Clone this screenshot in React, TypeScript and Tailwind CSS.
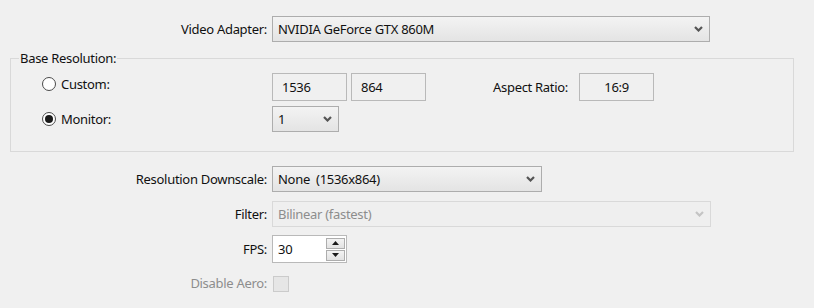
import React from 'react'

const font = { fontFamily: "'Noto Sans', 'Open Sans', sans-serif" }

function Chevron({ disabled }: { disabled?: boolean }) {
    return (
        <svg width="9" height="6" viewBox="0 0 9 6" className="shrink-0">
            <path
                d="M1 1 L4.5 4.5 L8 1"
                fill="none"
                stroke={disabled ? '#c4c4c4' : '#555555'}
                strokeWidth="2.2"
            />
        </svg>
    )
}

function Combo({ text, width, disabled }: { text: string; width: string; disabled?: boolean }) {
    return (
        <div
            className={
                'flex h-[26px] items-center justify-between pl-[5px] pr-[6px] border ' +
                width +
                (disabled
                    ? ' border-[#d9d9d9] bg-[#efefef] text-[#8d8d8d]'
                    : ' border-[#adadad] bg-gradient-to-b from-[#f3f3f3] to-[#e4e4e4] text-[#111111]')
            }
        >
            <span className="whitespace-pre">{text}</span>
            <Chevron disabled={disabled} />
        </div>
    )
}

function Label({ children, muted }: { children: React.ReactNode; muted?: boolean }) {
    return (
        <div className={'w-[272px] shrink-0 pr-[5px] text-right ' + (muted ? 'text-[#8d8d8d]' : 'text-[#111111]')}>
            {children}
        </div>
    )
}

function Radio({ checked }: { checked?: boolean }) {
    return (
        <span className="flex h-[14px] w-[14px] items-center justify-center rounded-full border border-[#4a4a4a] bg-white">
            {checked && <span className="h-[8px] w-[8px] rounded-full bg-[#1a1a1a]" />}
        </span>
    )
}

function Field({ text, width, center }: { text: string; width: string; center?: boolean }) {
    return (
        <div
            className={
                'flex h-[28px] items-center border border-[#b9b9b9] bg-[#f0f0f0] text-[#111111] ' +
                width +
                (center ? ' justify-center' : ' pl-[9px]')
            }
        >
            {text}
        </div>
    )
}

function SpinButton({ up }: { up?: boolean }) {
    return (
        <div className="flex h-[11px] w-[19px] items-center justify-center border border-[#adadad] bg-gradient-to-b from-[#f3f3f3] to-[#e2e2e2]">
            <svg width="7" height="4" viewBox="0 0 7 4">
                <path d={up ? 'M0 4 L3.5 0 L7 4 Z' : 'M0 0 L3.5 4 L7 0 Z'} fill="#1a1a1a" />
            </svg>
        </div>
    )
}

export default function App() {
    return (
        <div
            className="h-[308px] w-[814px] overflow-hidden bg-[#f0f0f0] pt-[16px] text-[13px] leading-[17px] tracking-[-0.3px]"
            style={font}
        >
            <div className="flex items-center">
                <Label>Video Adapter:</Label>
                <Combo text="NVIDIA GeForce GTX 860M" width="w-[438px]" />
            </div>

            <fieldset className="mx-[10px] mt-[8px] w-[784px] border border-[#d9d9d9] pb-[19px]">
                <legend className="ml-[8px] px-[1px] text-[#111111]">Base Resolution:</legend>

                <div className="mt-[6px] flex items-center">
                    <div className="flex w-[261px] shrink-0 items-center gap-[5px] pb-[6px] pl-[31px] text-[#111111]">
                        <Radio />
                        <span>Custom:</span>
                    </div>
                    <Field text="1536" width="w-[75px]" />
                    <div className="ml-[4px]">
                        <Field text="864" width="w-[75px]" />
                    </div>
                    <span className="ml-[67px] mr-[11px] text-[#111111]">Aspect Ratio:</span>
                    <Field text="16:9" width="w-[75px]" center />
                </div>

                <div className="mt-[5px] flex items-center">
                    <div className="flex w-[261px] shrink-0 items-center gap-[5px] pl-[31px] text-[#111111]">
                        <Radio checked />
                        <span>Monitor:</span>
                    </div>
                    <Combo text="1" width="w-[67px]" />
                </div>
            </fieldset>

            <div className="mt-[14px] flex items-center">
                <Label>Resolution Downscale:</Label>
                <Combo text="None  (1536x864)" width="w-[270px]" />
            </div>

            <div className="mt-[9px] flex items-center">
                <Label>Filter:</Label>
                <Combo text="Bilinear (fastest)" width="w-[439px]" disabled />
            </div>

            <div className="mt-[8px] flex items-center">
                <Label>FPS:</Label>
                <div className="flex h-[28px] w-[75px] items-center justify-between border border-[#b9b9b9] bg-white pl-[5px] pr-[1px] text-[#111111]">
                    <span>30</span>
                    <div className="flex flex-col gap-[1px]">
                        <SpinButton up />
                        <SpinButton />
                    </div>
                </div>
            </div>

            <div className="mt-[12px] flex items-center">
                <Label muted>Disable Aero:</Label>
                <div className="ml-[1px] h-[16px] w-[16px] border border-[#cbcbcb] bg-[#e6e6e6]" />
            </div>
        </div>
    )
}
